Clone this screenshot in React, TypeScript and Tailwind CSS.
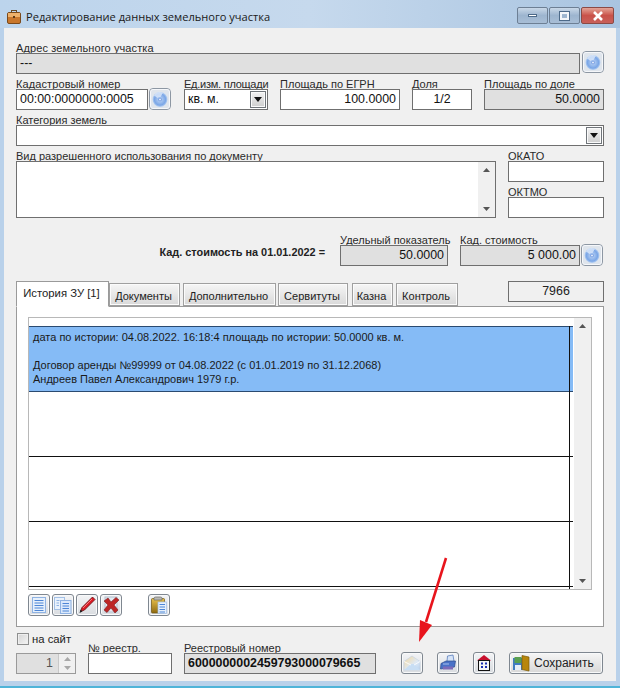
import React from "react";

const inputBase = "border border-[#6f6f6f] h-[21px] text-[12.4px] leading-[19px] px-[3px] text-[#111] whitespace-nowrap overflow-hidden";
const labelBase = "text-[11px] leading-[13px] h-[11px] text-[#2a2a2a] whitespace-nowrap";

function Disc({ className }: { className?: string }) {
  return (
    <svg width="22" height="22" viewBox="0 0 22 22" className={`shrink-0 ${className ?? ""}`}>
      <defs>
        <radialGradient id="discGrad" cx="50%" cy="50%" r="50%">
          <stop offset="0%" stopColor="#3f6fd0" />
          <stop offset="30%" stopColor="#a5c4f0" />
          <stop offset="75%" stopColor="#7aa6e6" />
          <stop offset="100%" stopColor="#b9d2f3" />
        </radialGradient>
      </defs>
      <rect x="0.5" y="0.5" width="21" height="21" rx="3.5" fill="#dfe5ec" stroke="#8d97a3" />
      <rect x="1.5" y="1.5" width="19" height="19" rx="2.5" fill="none" stroke="#f5f7fa" />
      <circle cx="11" cy="11.5" r="7.5" fill="url(#discGrad)" />
      <path d="M5 7.5 A7.5 7.5 0 0 1 14 4.8 L11.5 9 A3 3 0 0 0 8.5 10 Z" fill="#dce9fa" opacity="0.8" />
      <circle cx="11" cy="11.5" r="1" fill="#eaf1fc" />
    </svg>
  );
}

function IconButton({ children }: { children?: React.ReactNode }) {
  return (
    <div className="w-[22px] h-[22px] shrink-0 rounded-[3px] border border-[#7f8790] bg-gradient-to-b from-[#f3f4f6] to-[#d9dce0] shadow-[inset_0_0_0_1px_#f8f9fa] flex items-center justify-center">
      {children}
    </div>
  );
}

function Field({ label, className, value, gray, right, center, bold, labelClass }: {
  label?: string; className: string; value?: string; gray?: boolean; right?: boolean; center?: boolean; bold?: boolean; labelClass?: string;
}) {
  return (
    <div className={`flex flex-col shrink-0 ${className}`}>
      {label && <div className={`${labelBase} ${labelClass ?? ""}`}>{label}</div>}
      <div className={`relative ${inputBase} ${gray ? "bg-[#e0e0e0]" : "bg-white"} ${right ? "text-right" : ""} ${center ? "text-center" : ""} ${bold ? "font-bold" : ""}`}>
        {value}
      </div>
    </div>
  );
}

function ComboArrow() {
  return (
    <div className="w-[16px] h-[17px] border border-[#70757a] bg-gradient-to-b from-[#f2f2f2] to-[#cfcfcf] shadow-[inset_0_0_0_1px_#fafafa] flex items-center justify-center">
      <svg width="8" height="5" viewBox="0 0 8 5"><path d="M0 0H8L4 5Z" fill="#111" /></svg>
    </div>
  );
}

function ScrollBar({ className }: { className: string }) {
  return (
    <div className={`flex flex-col justify-between items-center bg-[#f0f0f0] py-[6px] ${className}`}>
      <svg width="7" height="4" viewBox="0 0 7 4"><path d="M0 4H7L3.5 0Z" fill="#555" /></svg>
      <svg width="7" height="4" viewBox="0 0 7 4"><path d="M0 0H7L3.5 4Z" fill="#555" /></svg>
    </div>
  );
}

function Tab({ label, w, active }: { label: string; w: string; active?: boolean }) {
  return active ? (
    <div className={`${w} h-[26px] -mb-px relative z-10 bg-white border border-[#9a9a9a] border-b-white pr-[2px] text-[11.3px] leading-[22px] text-center text-[#222] whitespace-nowrap`}>{label}</div>
  ) : (
    <div className={`${w} h-[23px] bg-gradient-to-b from-[#f6f6f6] to-[#d9d9d9] border border-[#a0a0a0] shadow-[inset_0_0_0_1px_#fbfbfb] pr-[2px] text-[11px] leading-[24px] text-center text-[#222] whitespace-nowrap`}>{label}</div>
  );
}

function WinBtn({ w, red, children }: { w: string; red?: boolean; children: React.ReactNode }) {
  return (
    <div className={`${w} h-[17px] rounded-[2px] border ${red ? "border-[#8b4a45] bg-gradient-to-b from-[#e2a498] via-[#c9524a] to-[#c8605a]" : "border-[#6d7f94] bg-gradient-to-b from-[#c9d8e8] via-[#9db5cf] to-[#a8bed6]"} flex items-center justify-center`}>
      {children}
    </div>
  );
}

export default function App() {
  return (
    <div className="relative w-[620px] h-[688px] overflow-hidden bg-[#b9d1ea] flex flex-col" style={{ fontFamily: '"Liberation Sans", Arial, sans-serif' }}>
      {/* Title bar */}
      <div className="h-[28px] shrink-0 flex items-center pl-[7px] pr-[6px] pt-[6px] bg-gradient-to-r from-[#bcd4ec] via-[#c6d9ed] to-[#a9c4e0]">
        <svg width="14" height="14" viewBox="0 0 14 14" className="shrink-0">
          <rect x="4.5" y="0.5" width="5" height="3" fill="none" stroke="#6b4a22" />
          <rect x="0.5" y="2.5" width="13" height="11" rx="1.5" fill="#c9772c" stroke="#7a4a1c" />
          <rect x="1" y="3" width="12" height="4" fill="#eeb16a" />
          <rect x="6" y="6" width="2" height="2" fill="#5e3a16" />
        </svg>
        <div className="ml-[5px] text-[11.1px] text-[#1a1a1a] whitespace-nowrap flex-1" style={{ fontFamily: '"Open Sans", sans-serif' }}>Редактирование данных земельного участка</div>
        <div className="flex items-center gap-[1px] -mt-[3px]">
          <WinBtn w="w-[31px]"><div className="w-[9px] h-[3px] bg-white border border-[#4d6a89]" /></WinBtn>
          <WinBtn w="w-[31px]"><div className="w-[9px] h-[8px] bg-transparent border-2 border-[#f4f7fa] outline outline-1 outline-[#4d6a89]" /></WinBtn>
          <WinBtn w="w-[33px]" red>
            <svg width="12" height="10" viewBox="0 0 12 10"><path d="M2 1L10 9M10 1L2 9" stroke="#fff" strokeWidth="2.6" /></svg>
          </WinBtn>
        </div>
      </div>

      {/* Body */}
      <div className="mx-[4px] h-[653px] shrink-0 bg-[#f0f0f0] px-[12px] pt-[14px]">
        {/* Address */}
        <div className="flex items-end gap-[2px] h-[32px]">
          <Field label="Адрес земельного участка" labelClass="tracking-[0.1px]" className="w-[564px]" value="---" gray />
          <Disc className="mb-[1px]" />
        </div>

        {/* Row 2 */}
        <div className="flex items-end h-[36px]">
          <Field label="Кадастровый номер" labelClass="tracking-[0.1px]" className="w-[132px]" value="00:00:0000000:0005" />
          <Disc className="ml-[1px]" />
          <div className="ml-[13px] w-[84px] shrink-0">
            <div className={`${labelBase} tracking-[-0.25px]`}>Ед.изм. площади</div>
            <div className={`relative ${inputBase} bg-white flex items-center justify-between pr-[1px] text-[11.5px]`}>
              <span>кв. м.</span>
              <ComboArrow />
            </div>
          </div>
          <Field label="Площадь по ЕГРН" className="ml-[12px] w-[120px]" value="100.0000" right />
          <Field label="Доля" className="ml-[12px] w-[60px]" value="1/2" center />
          <Field label="Площадь по доле" className="ml-[12px] w-[120px]" value="50.0000" gray right />
        </div>

        {/* Category */}
        <div className="mt-[4px] w-[588px]">
          <div className={labelBase}>Категория земель</div>
          <div className={`relative ${inputBase} bg-white flex items-center justify-end pr-[1px]`}><ComboArrow /></div>
        </div>

        {/* Usage */}
        <div className="mt-[4px] flex h-[68px]">
          <div className="w-[480px] flex flex-col shrink-0">
            <div className={labelBase}>Вид разрешенного использования по документу</div>
            <div className="relative h-[57px] border border-[#6f6f6f] bg-white flex justify-end">
              <ScrollBar className="w-[17px] h-full" />
            </div>
          </div>
          <div className="ml-[12px] w-[96px] flex flex-col">
            <Field label="ОКАТО" className="w-full" />
            <Field label="ОКТМО" className="w-full mt-[4px]" />
          </div>
        </div>

        {/* Cadastral cost */}
        <div className="mt-[16px] flex items-end h-[32px]">
          <div className="w-[309px] shrink-0 text-right text-[10.9px] font-bold text-[#222] leading-[16px] pb-[6px]">Кад. стоимость на 01.01.2022 =</div>
          <Field label="Удельный показатель" className="ml-[15px] w-[108px]" value="50.0000" gray right />
          <Field label="Кад. стоимость" className="ml-[12px] w-[120px]" value="5 000.00" gray right />
          <Disc className="ml-[1px]" />
        </div>

        {/* Tabs */}
        <div className="mt-[15px] flex items-end h-[25px] relative">
          <Tab label="История ЗУ [1]" w="w-[93px]" active />
          <Tab label="Документы" w="w-[71px]" />
          <div className="ml-[3px]"><Tab label="Дополнительно" w="w-[93px]" /></div>
          <div className="ml-[2px]"><Tab label="Сервитуты" w="w-[70px]" /></div>
          <div className="ml-[4px]"><Tab label="Казна" w="w-[41px]" /></div>
          <div className="ml-[3px]"><Tab label="Контроль" w="w-[62px]" /></div>
          <div className="ml-auto self-start w-[96px] h-[21px] border border-[#6f6f6f] bg-[#f0f0f0] text-[12.4px] leading-[19px] text-center text-[#222]">7966</div>
        </div>

        {/* Tab content */}
        <div className="w-[588px] h-[321px] border border-[#9a9a9a] bg-white px-[11px] pt-[10px]">
          <div className="relative w-[564px] h-[273px] border border-[#b8b8b8] flex overflow-hidden">
            <div className="w-[544px] pt-[8px] shrink-0">
              <div className="h-[66px] bg-[#85bbf6] border-t border-b border-[#2a4a70] px-[4px] text-[11px] leading-[14px] text-[#1a1a1a] pt-[3px]">
                <div className="whitespace-nowrap">дата по истории: 04.08.2022. 16:18:4 площадь по истории: 50.0000 кв. м.</div>
                <div className="mt-[14px] whitespace-nowrap">Договор аренды №99999 от 04.08.2022 (с 01.01.2019 по 31.12.2068)</div>
                <div className="whitespace-nowrap">Андреев Павел Александрович 1979 г.р.</div>
              </div>
              <div className="h-[65px] border-b border-[#111]" />
              <div className="h-[65px] border-b border-[#111]" />
              <div className="h-[65px] border-b border-[#111]" />
            </div>
            <div className="absolute left-[540px] top-[8px] bottom-0 w-px bg-[#111]" />
            <div className="w-px shrink-0" />
            <ScrollBar className="w-[17px] h-full" />
          </div>

          {/* Toolbar */}
          <div className="mt-[4px] flex gap-[2px]">
            <IconButton>
              <svg width="14" height="16" viewBox="0 0 14 16"><rect x="0.5" y="0.5" width="13" height="15" fill="#e6f0fc" stroke="#8fb3e3" /><path d="M2.5 3.5H11.5M2.5 6H11.5M2.5 8.5H11.5M2.5 11H11.5M2.5 13.5H11.5" stroke="#4d86d6" /></svg>
            </IconButton>
            <IconButton>
              <svg width="18" height="17" viewBox="0 0 18 17"><rect x="0.5" y="0.5" width="10" height="12" fill="#eaf2fc" stroke="#a3c0e6" /><rect x="6.5" y="3.5" width="10.5" height="13" fill="#dbe9fb" stroke="#8fb3e3" /><path d="M8.5 6.5H15M8.5 9H15M8.5 11.5H15M8.5 14H15" stroke="#4d86d6" /><path d="M2.5 3.5H5.5M2.5 6H5M2.5 8.5H5" stroke="#8fb3e3" /></svg>
            </IconButton>
            <IconButton>
              <svg width="18" height="18" viewBox="0 0 18 18"><path d="M14.5 1L17 3.5L6.5 14L2.5 15.5L4 11.5Z" fill="#dd1a24" stroke="#5f0c10" strokeWidth="0.8" /><path d="M1.5 17L2.5 13.5L4.5 15.5Z" fill="#222" /><path d="M14 3L5 12" stroke="#f57b7f" strokeWidth="1" /></svg>
            </IconButton>
            <IconButton>
              <svg width="18" height="18" viewBox="0 0 18 18"><rect x="3" y="1" width="12" height="15" fill="#e3e8f0" stroke="#b3bfce" /><path d="M2 5L6 2L9 6L14 1.5L17 4L12 9L16 14L13 17L9 12L5 16.5L2 14L6 9Z" fill="#bd2626" stroke="#7d1d1d" strokeWidth="0.6" /></svg>
            </IconButton>
            <div className="ml-[24px]">
              <IconButton>
                <svg width="18" height="18" viewBox="0 0 18 18"><defs><linearGradient id="clipGrad" x1="0" y1="0" x2="0" y2="1"><stop offset="0%" stopColor="#e8c04a" /><stop offset="100%" stopColor="#8f6a10" /></linearGradient></defs><rect x="1.5" y="2.5" width="13" height="14.5" rx="1" fill="url(#clipGrad)" stroke="#6d5310" strokeWidth="0.7" /><path d="M4 4V2A1.5 1.5 0 0 1 5.5 1H10.5A1.5 1.5 0 0 1 12 2V4Z" fill="#b8b8b4" stroke="#6a6a66" strokeWidth="0.7" /><rect x="8" y="6" width="8.5" height="11.5" fill="#e6f0fb" stroke="#9dbde6" strokeWidth="0.7" /><path d="M9.5 8.5H15M9.5 11H15M9.5 13.5H15M9.5 16H15" stroke="#4d86d6" /></svg>
              </IconButton>
            </div>
          </div>
        </div>

        {/* Footer */}
        <div className="mt-[6px] flex items-end h-[41px]">
          <div className="w-[60px] shrink-0 flex flex-col">
            <div className="flex items-center h-[16px] mb-[6px] text-[11.3px] text-[#222] whitespace-nowrap">
              <div className="w-[12px] h-[12px] ml-[1px] mr-[3px] border border-[#8e8f8f] bg-gradient-to-br from-[#d4d4d4] to-[#f4f4f4] shadow-[inset_0_0_0_1px_#eee] shrink-0" />
              на сайт
            </div>
            <div className="h-[21px] border border-[#9a9a9a] bg-[#e0e0e0] flex items-center justify-end">
              <span className="text-[12.4px] text-[#555] mr-[5px]">1</span>
              <div className="w-[17px] h-full bg-[#f0f0f0] flex flex-col items-center justify-around py-[1px] border-l border-[#c8c8c8]">
                <svg width="7" height="4" viewBox="0 0 7 4"><path d="M0 4H7L3.5 0Z" fill="#a8a8a8" /></svg>
                <svg width="7" height="4" viewBox="0 0 7 4"><path d="M0 0H7L3.5 4Z" fill="#a8a8a8" /></svg>
              </div>
            </div>
          </div>
          <Field label="№ реестр." className="ml-[12px] w-[84px]" />
          <Field label="Реестровый номер" className="ml-[12px] w-[192px]" value="6000000002459793000079665" gray bold />
          <div className="ml-[25px] flex items-center">
            <IconButton>
              <svg width="18" height="16" viewBox="0 0 18 16"><defs><linearGradient id="envGrad" x1="0" y1="0" x2="1" y2="1"><stop offset="0%" stopColor="#f5d89a" /><stop offset="60%" stopColor="#dfe9f4" /><stop offset="100%" stopColor="#b7d2ef" /></linearGradient></defs><path d="M1 6.5L9 1L17 6.5V15H1Z" fill="url(#envGrad)" stroke="#c5d3e2" strokeWidth="0.7" /><path d="M1 15L8 9H11L17 15Z" fill="#c8def4" /><path d="M1 6.5L8 10M17 6.5L11 10" stroke="#fff" strokeWidth="0.8" /></svg>
            </IconButton>
            <div className="ml-[14px]">
              <IconButton>
                <svg width="18" height="18" viewBox="0 0 18 18"><path d="M8.5 2L14 1L15 7.5H8Z" fill="#d5e3f7" stroke="#5a7fbe" strokeWidth="0.8" /><path d="M2 9.5L7 7H16.5L15.5 13L1.5 15Z" fill="#4a72c8" stroke="#2c4a8a" strokeWidth="0.7" /><rect x="4" y="12.5" width="10" height="3" fill="#7d6bb8" /><path d="M4 10H10" stroke="#a8c0ec" /></svg>
              </IconButton>
            </div>
            <div className="ml-[14px]">
              <IconButton>
                <svg width="16" height="18" viewBox="0 0 16 18"><path d="M1 6.5L8 1L15 6.5Z" fill="#c8102e" /><rect x="2.5" y="6.5" width="11" height="10" fill="#f5f5f5" stroke="#111" /><path d="M5 8.5h2v2H5zM9 8.5h2v2H9zM5 12h2v2H5zM9 12h2v2H9z" fill="#1c2fb0" /></svg>
              </IconButton>
            </div>
            <div className="ml-[14px] w-[94px] h-[22px] rounded-[3px] border border-[#7f8790] bg-gradient-to-b from-[#f6f6f6] to-[#d8d8d8] shadow-[inset_0_0_0_1px_#f8f9fa] flex items-center pl-[2px] text-[12px] text-[#222]">
              <svg width="18" height="18" viewBox="0 0 18 18" className="shrink-0"><rect x="1" y="4" width="9" height="12" fill="#3f7cc0" /><rect x="2.5" y="3" width="7" height="6" fill="#5aa050" /><rect x="3" y="11" width="6" height="5" fill="#e6eef7" /><path d="M10 1.5L17 3V17L10 15.5Z" fill="#b8860b" stroke="#7a5a08" strokeWidth="0.7" /></svg>
              <span className="ml-[4px]">Сохранить</span>
            </div>
          </div>
        </div>
      </div>

      {/* Bottom frame */}
      <div className="h-[5px] shrink-0 bg-[#b9d1ea]" />
      <div className="h-[2px] shrink-0 bg-[#4fb4d8]" />

      {/* Annotation arrow */}
      <svg className="absolute left-[405px] top-[550px]" width="50" height="100" viewBox="405 550 50 100">
        <path d="M446 558L426 622" stroke="#e8141c" strokeWidth="2.6" fill="none" />
        <path d="M419 642L420 620L432 625Z" fill="#e8141c" />
      </svg>
    </div>
  );
}
